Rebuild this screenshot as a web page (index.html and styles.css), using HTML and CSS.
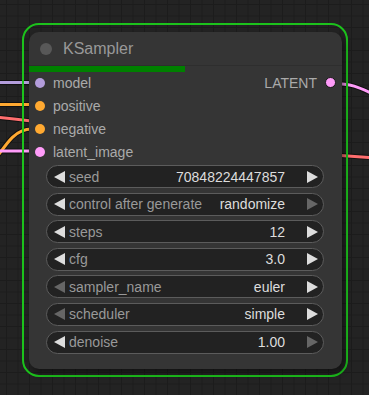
FILE: index.html
```html
<!DOCTYPE html>
<html lang="en">
<head>
  <meta charset="UTF-8">
  <title>KSampler</title>
  <link rel="stylesheet" href="styles.css">
</head>
<body>
  <div class="canvas">
    <svg class="wires" width="369" height="395" viewBox="0 0 369 395">
      <g class="wire-outline">
        <path d="M-5 82.5 L30 82.5"/>
        <path d="M-5 104.5 L30 104.5"/>
        <path d="M-5 117 C 120 130, 250 150, 375 158"/>
        <path d="M-12 170 C 8 141, 15 129, 32 129"/>
        <path d="M-5 151 L30 151"/>
        <path d="M334 83.5 C 352 83.5, 360 88, 375 95"/>
      </g>
      <path class="wire" stroke="#b39ddb" d="M-5 82.5 L30 82.5"/>
      <path class="wire" stroke="#ffa931" d="M-5 104.5 L30 104.5"/>
      <path class="wire" stroke="#ff6e6e" d="M-5 117 C 120 130, 250 150, 375 158"/>
      <path class="wire" stroke="#ffa931" d="M-12 170 C 8 141, 15 129, 32 129"/>
      <path class="wire" stroke="#ff9cf9" d="M-5 151 L30 151"/>
      <path class="wire" stroke="#ff9cf9" d="M334 83.5 C 352 83.5, 360 88, 375 95"/>
    </svg>

    <div class="selected">
      <div class="node">
        <div class="title">
          <span class="title-dot"></span>
          <span class="title-text">KSampler</span>
        </div>
        <div class="progress"></div>

        <div class="slots">
          <div class="inputs">
            <div class="slot"><span class="dot model"></span>model</div>
            <div class="slot"><span class="dot cond"></span>positive</div>
            <div class="slot"><span class="dot cond"></span>negative</div>
            <div class="slot"><span class="dot latent"></span>latent_image</div>
          </div>
          <div class="outputs">
            <div class="slot">LATENT<span class="dot latent out"></span></div>
          </div>
        </div>

        <div class="widgets">
          <div class="widget">
            <span class="arrow left"></span>
            <span class="label">seed</span>
            <span class="value">70848224447857</span>
            <span class="arrow right"></span>
          </div>
          <div class="widget">
            <span class="arrow left"></span>
            <span class="label">control after generate</span>
            <span class="value">randomize</span>
            <span class="arrow right off"></span>
          </div>
          <div class="widget">
            <span class="arrow left"></span>
            <span class="label">steps</span>
            <span class="value">12</span>
            <span class="arrow right"></span>
          </div>
          <div class="widget">
            <span class="arrow left"></span>
            <span class="label">cfg</span>
            <span class="value">3.0</span>
            <span class="arrow right"></span>
          </div>
          <div class="widget">
            <span class="arrow left off"></span>
            <span class="label">sampler_name</span>
            <span class="value">euler</span>
            <span class="arrow right"></span>
          </div>
          <div class="widget">
            <span class="arrow left off"></span>
            <span class="label">scheduler</span>
            <span class="value">simple</span>
            <span class="arrow right"></span>
          </div>
          <div class="widget">
            <span class="arrow left"></span>
            <span class="label">denoise</span>
            <span class="value">1.00</span>
            <span class="arrow right off"></span>
          </div>
        </div>
      </div>
    </div>
  </div>
</body>
</html>
```

FILE: styles.css
```css
body {
  margin: 0;
  font-family: "Liberation Sans", Arial, sans-serif;
  background-color: #222;
}

.canvas {
  position: relative;
  width: 369px;
  height: 395px;
  overflow: hidden;
  box-sizing: border-box;
  padding: 23px 0 0 22px;
  background-color: #232323;
  background-image:
    linear-gradient(to right, #1c1c1c 1px, transparent 1px),
    linear-gradient(to bottom, #1c1c1c 1px, transparent 1px);
  background-size: 11.5px 11.5px;
  background-position: 6px 4px;
}

.wires {
  position: absolute;
  left: 0;
  top: 0;
}

.wire-outline path {
  fill: none;
  stroke: #111;
  stroke-width: 5;
}

.wire {
  fill: none;
  stroke-width: 3;
}

.selected {
  position: relative;
  width: 326px;
  box-sizing: border-box;
  border: 2px solid #1cc21c;
  border-radius: 17px;
  padding: 7px 5px 6px 5px;
}

.node {
  width: 313px;
  height: 337px;
  box-sizing: border-box;
  background-color: #353535;
  border-radius: 10px;
  box-shadow: 3px 4px 6px rgba(0, 0, 0, 0.45);
  overflow: hidden;
}

.title {
  display: flex;
  align-items: center;
  height: 34px;
  padding-left: 11px;
  box-sizing: border-box;
  border-bottom: 1px solid #2e2e2e;
}

.title-dot {
  width: 12px;
  height: 12px;
  border-radius: 50%;
  background-color: #585858;
  margin-right: 11px;
}

.title-text {
  font-size: 16px;
  color: #999;
}

.progress {
  width: 156px;
  height: 6px;
  background-color: #008000;
}

.slots {
  display: flex;
  justify-content: space-between;
  margin-top: -1px;
  font-size: 14px;
  color: #aaa;
}

.slot {
  display: flex;
  align-items: center;
  height: 23px;
}

.inputs .slot {
  padding-left: 6px;
}

.outputs .slot {
  padding-right: 6px;
}

.dot {
  width: 10px;
  height: 10px;
  border-radius: 50%;
  margin-right: 8px;
  box-sizing: border-box;
}

.dot.out {
  margin-right: 0;
  margin-left: 8px;
  border: 1px solid #1a1a1a;
  width: 11px;
  height: 11px;
}

.dot.model { background-color: #b39ddb; }
.dot.cond { background-color: #ffa931; }
.dot.latent { background-color: #ff9cf9; }

.widgets {
  display: flex;
  flex-direction: column;
  gap: 4.6px;
  margin: 2px 18px 0 17px;
}

.widget {
  display: flex;
  align-items: center;
  height: 23px;
  box-sizing: border-box;
  border: 1px solid #5c5c5c;
  border-radius: 12px;
  background-color: #222;
  padding: 0 5px 0 7px;
  font-size: 14px;
}

.label {
  color: #999;
  margin-left: 4px;
  white-space: nowrap;
}

.value {
  color: #ddd;
  margin-left: auto;
  margin-right: 22px;
  white-space: nowrap;
}

.arrow {
  width: 0;
  height: 0;
  border-top: 6px solid transparent;
  border-bottom: 6px solid transparent;
}

.arrow.left {
  border-right: 11px solid #ddd;
}

.arrow.right {
  border-left: 11px solid #ddd;
}

.arrow.left.off {
  border-right-color: #666;
}

.arrow.right.off {
  border-left-color: #666;
}
```
